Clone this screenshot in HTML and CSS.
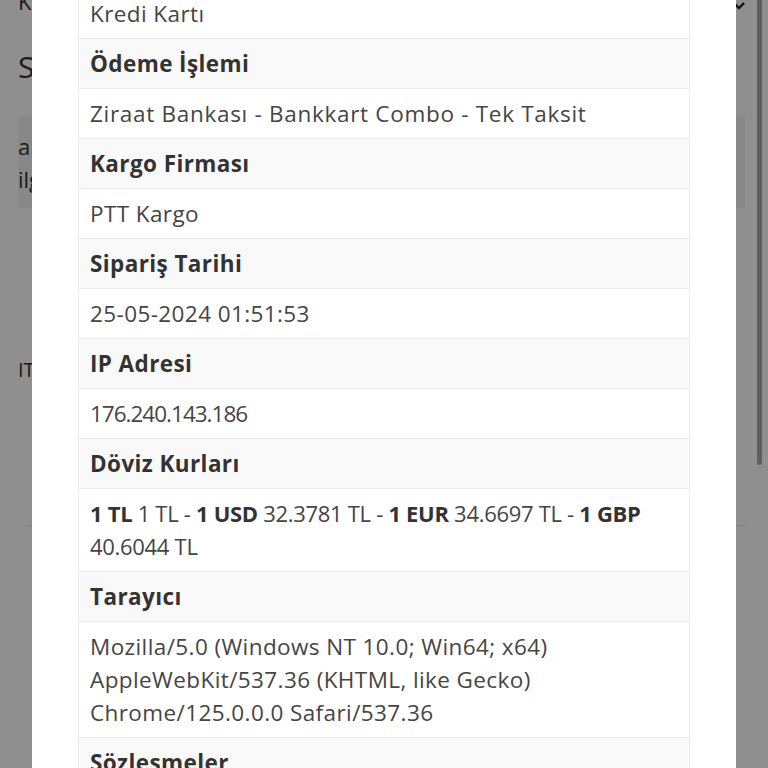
FILE: index.html
```html
<!DOCTYPE html>
<html lang="tr">
<head>
<meta charset="utf-8">
<title>Sipariş Detayı</title>
<link rel="stylesheet" href="styles.css">
</head>
<body>
<div class="page">
  <div class="page-top">
    <span>Kargo Takip</span>
    <svg class="chev" width="12" height="9" viewBox="0 0 12 9"><path d="M1.5 1.5 L6 6 L10.5 1.5" fill="none" stroke="#222" stroke-width="2.4" stroke-linecap="round"/></svg>
  </div>
  <h2 class="page-title">Sipariş Detayı</h2>
  <div class="page-card">
    <p>arası</p>
    <p>ilgi</p>
  </div>
  <p class="page-note">ITT</p>
  <hr class="page-rule">
</div>

<div class="overlay">
  <div class="modal">
    <table class="info">
      <tr><th>Ödeme Yöntemi</th></tr>
      <tr><td>Kredi Kartı</td></tr>
      <tr><th>Ödeme İşlemi</th></tr>
      <tr><td class="wide">Ziraat Bankası - Bankkart Combo - Tek Taksit</td></tr>
      <tr><th>Kargo Firması</th></tr>
      <tr><td>PTT Kargo</td></tr>
      <tr><th>Sipariş Tarihi</th></tr>
      <tr><td>25-05-2024 01:51:53</td></tr>
      <tr><th>IP Adresi</th></tr>
      <tr><td class="ip">176.240.143.186</td></tr>
      <tr><th>Döviz Kurları</th></tr>
      <tr><td class="rates"><b>1 TL</b> 1 TL - <b>1 USD</b> 32.3781 TL - <b>1 EUR</b> 34.6697 TL - <b>1 GBP</b> 40.6044 TL</td></tr>
      <tr><th>Tarayıcı</th></tr>
      <tr><td>Mozilla/5.0 (Windows NT 10.0; Win64; x64) AppleWebKit/537.36 (KHTML, like Gecko) Chrome/125.0.0.0 Safari/537.36</td></tr>
      <tr><th>Sözleşmeler</th></tr>
      <tr><td>Mesafeli Satış Sözleşmesi</td></tr>
    </table>
  </div>
</div>
<div class="scroll-thumb"></div>
</body>
</html>
```

FILE: styles.css
```css
html, body {
  margin: 0;
  padding: 0;
  height: 100%;
  overflow: hidden;
  background: #ffffff;
  font-family: "Open Sans", "Liberation Sans", sans-serif;
  color: #333;
}

.page {
  padding: 0 23px 0 18px;
}

.page-top {
  display: flex;
  justify-content: space-between;
  align-items: flex-start;
  height: 40px;
  margin-top: -14px;
  font-size: 22px;
  line-height: 30px;
}

.chev {
  margin-top: 16px;
}

.page-title {
  margin: 15px 0 0;
  font-size: 30px;
  font-weight: 500;
  line-height: 52px;
  height: 75px;
}

.page-card {
  background: #f2f2f2;
  height: 92px;
  padding: 14px 0 0;
  box-sizing: border-box;
  font-size: 22px;
}

.page-card p {
  margin: 0;
  line-height: 33px;
}

.page-note {
  margin: 148px 0 0;
  font-size: 20px;
}

.page-rule {
  border: 0;
  border-top: 1px solid #e6e6e6;
  margin: 142px 0 0 7px;
}

.overlay {
  position: fixed;
  inset: 0;
  background: rgba(0, 0, 0, 0.44);
  overflow: hidden;
}

.modal {
  display: flow-root;
  margin: 0 32px;
  width: 704px;
  height: 100%;
  background: #ffffff;
  padding: 0 46px;
  box-sizing: border-box;
  overflow: hidden;
}

.info {
  width: 100%;
  border-collapse: collapse;
  border: 1px solid #ececec;
  margin-top: -62px;
  font-size: 22.5px;
  letter-spacing: 0.4px;
  line-height: 33px;
}

.info th,
.info td {
  text-align: left;
  padding: 8px 11px;
  border-top: 1px solid #ececec;
}

.info th {
  background: #f9f9f9;
  font-weight: 700;
  color: #333;
}

.info td {
  font-weight: 400;
  color: #454545;
}

.info td b {
  color: #333;
  white-space: nowrap;
}

.info .wide {
  letter-spacing: 0.7px;
}

.info .ip {
  letter-spacing: -1px;
}

.info .rates {
  font-size: 22px;
  letter-spacing: -0.3px;
}

.scroll-thumb {
  position: fixed;
  top: -10px;
  left: 757px;
  width: 5px;
  height: 475px;
  border-radius: 3px;
  background: #5e5e5e;
}
```
